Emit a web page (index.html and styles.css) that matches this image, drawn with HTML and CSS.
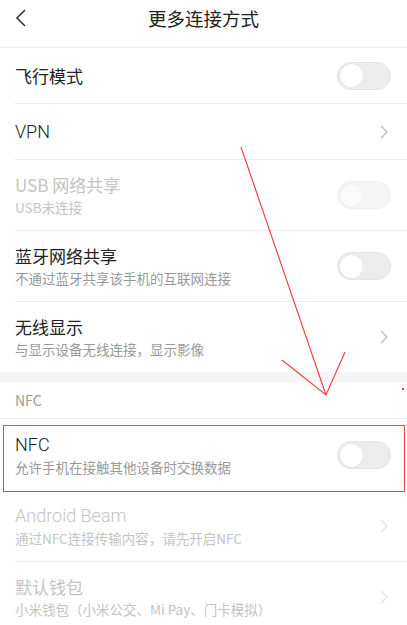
FILE: index.html
```html
<!DOCTYPE html>
<html lang="zh">
<head>
<meta charset="UTF-8">
<meta name="viewport" content="width=device-width, initial-scale=1.0">
<title>更多连接方式</title>
<link rel="stylesheet" href="styles.css">
</head>
<body>
<div class="page">
  <div class="header">
    <svg class="back" width="14" height="20" viewBox="0 0 14 20"><path d="M11 2 L3 10 L11 18" fill="none" stroke="#333" stroke-width="1.6"/></svg>
    <div class="title">更多连接方式</div>
  </div>

  <div class="row short">
    <div class="text"><div class="name">飞行模式</div></div>
    <div class="switch"><div class="knob"></div></div>
  </div>
  <div class="row short">
    <div class="text"><div class="name latin">VPN</div></div>
    <svg class="more" width="10" height="16" viewBox="0 0 10 16"><path d="M2 2 L8 8 L2 14" fill="none" stroke="#bbb" stroke-width="1.2"/></svg>
  </div>
  <div class="row off">
    <div class="text"><div class="name">USB 网络共享</div><div class="sub">USB未连接</div></div>
    <div class="switch"><div class="knob"></div></div>
  </div>
  <div class="row">
    <div class="text"><div class="name">蓝牙网络共享</div><div class="sub">不通过蓝牙共享该手机的互联网连接</div></div>
    <div class="switch"><div class="knob"></div></div>
  </div>
  <div class="row last">
    <div class="text"><div class="name">无线显示</div><div class="sub">与显示设备无线连接，显示影像</div></div>
    <svg class="more" width="10" height="16" viewBox="0 0 10 16"><path d="M2 2 L8 8 L2 14" fill="none" stroke="#bbb" stroke-width="1.2"/></svg>
  </div>

  <div class="band"></div>
  <div class="section">NFC</div>

  <div class="row nfc">
    <div class="text"><div class="name latin">NFC</div><div class="sub">允许手机在接触其他设备时交换数据</div></div>
    <div class="switch"><div class="knob"></div></div>
    <div class="mark"></div>
  </div>
  <div class="row off">
    <div class="text"><div class="name latin">Android Beam</div><div class="sub">通过NFC连接传输内容，请先开启NFC</div></div>
    <svg class="more" width="10" height="16" viewBox="0 0 10 16"><path d="M2 2 L8 8 L2 14" fill="none" stroke="#e2e2e2" stroke-width="1.2"/></svg>
  </div>
  <div class="row off last">
    <div class="text"><div class="name">默认钱包</div><div class="sub">小米钱包（小米公交、Mi Pay、门卡模拟）</div></div>
    <svg class="more" width="10" height="16" viewBox="0 0 10 16"><path d="M2 2 L8 8 L2 14" fill="none" stroke="#e2e2e2" stroke-width="1.2"/></svg>
  </div>

  <svg class="arrow" width="407" height="625" viewBox="0 0 407 625">
    <g stroke="#f03a3a" stroke-width="1.1" fill="none">
      <path d="M241 147 L326 395"/>
      <path d="M282 360 L326 395 L345 352"/>
    </g>
    <rect x="402" y="388" width="2" height="2" fill="#f03a3a"/>
  </svg>
</div>
</body>
</html>
```

FILE: styles.css
```css
body {
  margin: 0;
  background-color: #fff;
  font-family: "Noto Sans CJK SC", sans-serif;
  color: #333;
}

.page {
  position: relative;
  width: 407px;
  height: 625px;
  overflow: hidden;
}

.header {
  height: 47px;
  display: flex;
  align-items: center;
  justify-content: center;
  position: relative;
  border-bottom: 1px solid #eee;
}

.back {
  position: absolute;
  left: 14px;
  top: 8px;
}

.title {
  font-size: 18.5px;
  color: #222;
  margin-top: -12px;
}

.row {
  position: relative;
  height: 70px;
  margin-left: 15px;
  padding-right: 16px;
  display: flex;
  align-items: center;
  border-bottom: 1px solid #ececec;
}

.row.short {
  height: 55px;
}

.row.last {
  border-bottom: none;
}

.text {
  flex: 1;
}

.name {
  font-size: 17px;
  line-height: 22px;
  color: #222;
}

.latin {
  font-family: Roboto, sans-serif;
  font-weight: 300;
  font-size: 18px;
}

.sub {
  font-size: 13.5px;
  line-height: 20px;
  color: #999;
  margin-top: 1px;
}

.off .name,
.off .sub {
  color: #c4c4c4;
}

.switch {
  height: 26px;
  border: 1px solid #e4e4e4;
  border-radius: 14px;
  background-color: #ececec;
  display: flex;
  align-items: center;
  padding: 0 2px;
  width: 48px;
}

.knob {
  width: 23px;
  height: 23px;
  border-radius: 50%;
  background-color: #fff;
  box-shadow: 0 0 1px rgba(0, 0, 0, 0.15);
}

.off .switch {
  background-color: #f5f5f5;
  border-color: #f0f0f0;
}

.off .knob {
  background-color: #fafafa;
}

.more {
  margin-right: 2px;
}

.band {
  height: 10px;
  background-color: #f5f5f5;
}

.section {
  height: 36px;
  line-height: 36px;
  padding-left: 15px;
  font-size: 14px;
  color: #999;
  border-bottom: 1px solid #ececec;
}

.row.nfc {
  height: 72px;
  border-bottom: none;
}

.mark {
  position: absolute;
  left: -12px;
  right: 2px;
  top: 6px;
  bottom: -1px;
  border: 1.5px solid #f0454c;
}

.arrow {
  position: absolute;
  left: 0;
  top: 0;
  pointer-events: none;
}
```
